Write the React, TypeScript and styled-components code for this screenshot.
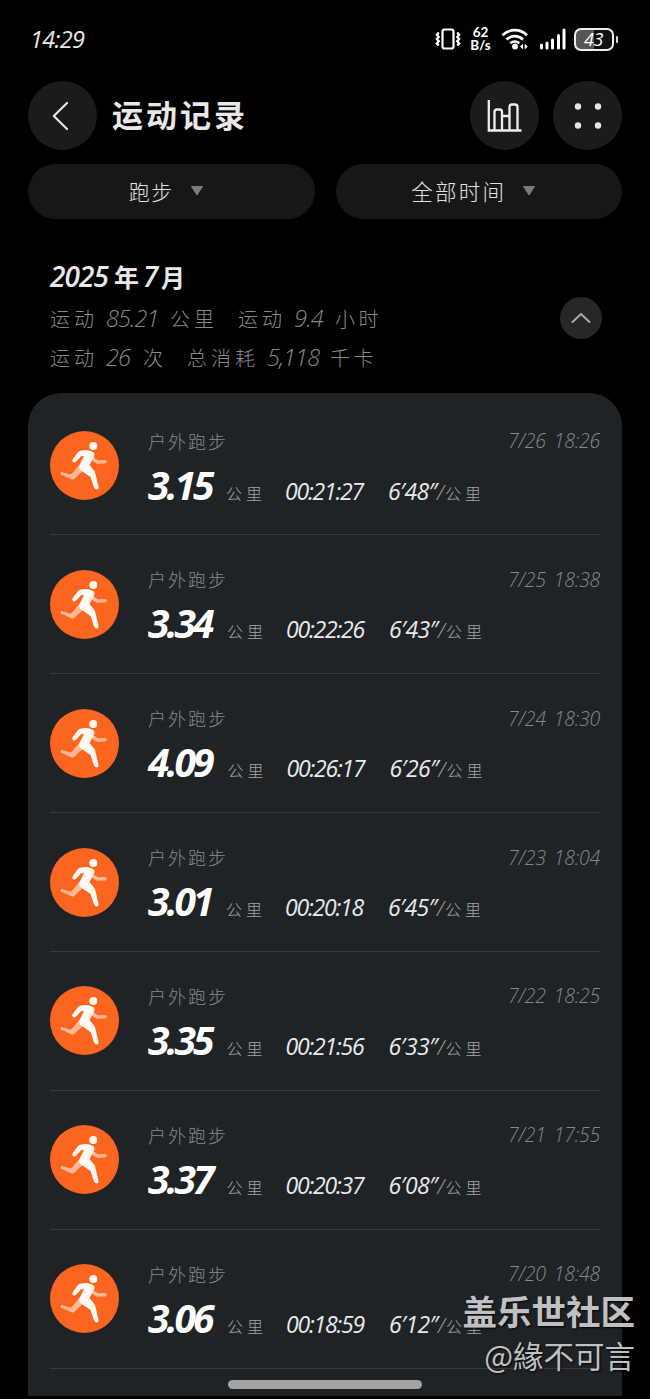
import React from "react";
import styled, { createGlobalStyle } from "styled-components";

const Global = createGlobalStyle`
  * { box-sizing: border-box; }
  body { margin: 0; background: #000; }
`;

const cjk = `"Noto Sans CJK SC", sans-serif`;
const latin = `"Open Sans", "Noto Sans", sans-serif`;

const Screen = styled.div`
  position: relative;
  width: 650px;
  height: 1399px;
  overflow: hidden;
  background: #000;
  color: #e8e8e8;
  font-family: ${cjk};
  padding: 0 28px;
  display: flex;
  flex-direction: column;
`;

const Num = styled.span<{ $size: number; $weight?: number; $w?: number; $ls?: number }>`
  font-family: ${latin};
  font-style: italic;
  white-space: nowrap;
  flex: none;
  font-size: ${(p) => p.$size}px;
  font-weight: ${(p) => p.$weight ?? 400};
  letter-spacing: ${(p) => p.$ls ?? 0}px;
  width: ${(p) => (p.$w ? `${p.$w}px` : "auto")};
`;

const Han = styled.span<{ $size: number; $ls: number; $w?: number; $weight?: number }>`
  font-size: ${(p) => p.$size}px;
  letter-spacing: ${(p) => p.$ls}px;
  font-weight: ${(p) => p.$weight ?? 300};
  width: ${(p) => (p.$w ? `${p.$w}px` : "auto")};
  white-space: nowrap;
  flex: none;
`;

const StatusBar = styled.header`
  height: 81px;
  display: flex;
  align-items: center;
  justify-content: space-between;
  padding: 0 4px 3px 2px;
`;

const StatusIcons = styled.div`
  display: flex;
  align-items: center;
`;

const Speed = styled.div`
  display: flex;
  flex-direction: column;
  align-items: center;
  width: 22px;
  margin: 0 9px 0 9px;
  font: 700 13.5px/13px Lato, sans-serif;
  color: #fff;
`;

const Battery = styled.div`
  display: flex;
  align-items: center;
  justify-content: center;
  width: 40px;
  height: 23px;
  margin-left: 8px;
  border: 2px solid #eee;
  border-radius: 7px;
  background: linear-gradient(90deg, #555 0 50%, #111 50%);
  color: #fff;
`;

const BatteryTip = styled.i`
  width: 2.5px;
  height: 7px;
  margin-left: 2px;
  border-radius: 2px;
  background: #ddd;
`;

const Header = styled.div`
  height: 69px;
  display: flex;
  align-items: center;
`;

const HeaderActions = styled.div`
  display: flex;
  gap: 14px;
`;

const RoundButton = styled.button<{ $size?: number; $bg?: string }>`
  width: ${(p) => p.$size ?? 69}px;
  height: ${(p) => p.$size ?? 69}px;
  flex: none;
  border: 0;
  padding: 0;
  border-radius: 50%;
  background: ${(p) => p.$bg ?? "#1b1b1b"};
  display: flex;
  align-items: center;
  justify-content: center;
`;

const Title = styled.h1`
  flex: 1;
  margin: 0 0 4px 15px;
  font-size: 31px;
  line-height: 40px;
  font-weight: 700;
  letter-spacing: 3px;
`;

const Filters = styled.div`
  margin-top: 14px;
  display: flex;
  gap: 21px;
`;

const Filter = styled.button`
  flex: 1;
  height: 55px;
  border: 0;
  border-radius: 28px;
  background: #171717;
  color: #e2e2e2;
  font-family: inherit;
  display: flex;
  align-items: center;
  justify-content: center;
  gap: 16px;
  padding: 0 10px 2px 0;
`;

const Month = styled.section`
  height: 174px;
  padding: 38px 20px 0 22px;
  display: flex;
  align-items: center;
  justify-content: space-between;
`;

const MonthText = styled.div`
  align-self: flex-start;
`;

const MonthTitle = styled.div`
  display: flex;
  align-items: baseline;
  height: 42px;
  line-height: 38px;
`;

const Summary = styled.div`
  display: flex;
  align-items: baseline;
  height: 38.5px;
  line-height: 38px;
  color: #8a8a8a;
`;

const Collapse = styled.div`
  margin-bottom: 15px;
`;

const Card = styled.main`
  height: 1002.5px;
  padding: 3.6px 22px 0;
  border-radius: 33px 33px 0 0;
  background: #202326;
`;

const Row = styled.article`
  height: 138.85px;
  display: flex;
  align-items: center;
  border-bottom: 1.5px solid #363a3d;
`;

const RowBody = styled.div`
  flex: 1;
  margin-left: 29px;
  padding-top: 12px;
`;

const RowTop = styled.div`
  display: flex;
  justify-content: space-between;
  align-items: center;
  height: 24px;
  color: #85898c;
`;

const DateTime = styled(Num)`
  word-spacing: 3px;
`;

const RowMain = styled.div`
  display: flex;
  align-items: baseline;
  height: 60px;
  line-height: 60px;
  margin-top: 2px;
  color: #e9eaeb;
`;

const Distance = styled(Num)`
  color: #fff;
`;

const Unit = styled(Han)`
  color: #a0a3a5;
`;

const Slash = styled(Num)`
  color: #a0a3a5;
`;

const HomeBar = styled.div`
  position: absolute;
  left: 228px;
  top: 1380px;
  width: 194px;
  height: 9px;
  border-radius: 5px;
  background: #a3a3a3;
`;

const Watermark = styled.div`
  position: absolute;
  right: 15px;
  top: 1288px;
  text-align: right;
  color: #bfc0c2;
  text-shadow: 1px 1px 2px #000;
  white-space: nowrap;
`;

const Community = styled.div`
  font-size: 34.5px;
  line-height: 45px;
  font-weight: 700;
`;

const Author = styled.div`
  font-size: 30.5px;
  line-height: 45px;
  font-weight: 400;
`;

const VibrateIcon = () => (
  <svg width="26" height="24" viewBox="0 0 26 24" fill="none" stroke="#fff" strokeWidth="2.2">
    <rect x="7.500" y="2.500" width="11" height="19" rx="2" />
    <path d="m3.800 5.500-2 2.200 2 2.200-2 2.200 2 2.200-2 2.200 2 2M22.200 5.500l2 2.200-2 2.200 2 2.200-2 2.200 2 2.200-2 2" strokeWidth="2.300" />
  </svg>
);

const WifiIcon = () => (
  <svg width="28" height="24" viewBox="0 0 28 24" fill="none" stroke="#fff" strokeWidth="2.7">
    <path d="M1.500 8.200a17.500 17.500 0 0 1 24.500 0M5.500 12.500a12 12 0 0 1 16.500 0M9.300 16.300a6.500 6.500 0 0 1 9 0" />
    <circle cx="14" cy="19.500" r="2.900" fill="#fff" stroke="none" />
    <path d="m22 16.500-3 3 3 3zM23.700 16.500l3 3-3 3z" fill="#fff" stroke="none" />
  </svg>
);

const SignalIcon = () => (
  <svg width="37" height="23" viewBox="-11 0 37 23" stroke="#fff" strokeWidth="3" strokeLinecap="round">
    <path d="M1.500 17v3M7 15v5M12.500 12v8M18.500 7.500V20M24 2v18" />
  </svg>
);

const BackIcon = () => (
  <svg width="22" height="32" viewBox="0 0 22 32" fill="none" stroke="#e6e6e6" strokeWidth="2.2" strokeLinecap="round" strokeLinejoin="round">
    <path d="M15 3 1.800 16 15 29" />
  </svg>
);

const ChartIcon = () => (
  <svg width="35" height="32" viewBox="0 0 35 32" fill="none" stroke="#eee" strokeWidth="2.300">
    <path d="M1.800 0v30.500H34.500M7.500 30.500V12a2.500 2.500 0 0 1 2.500-2.500h2.500A2.500 2.500 0 0 1 15 12V30.500M22.500 30.500V7A2.500 2.500 0 0 1 25 4.500h3A2.500 2.500 0 0 1 30.500 7V30.500M15 16h7.500" />
  </svg>
);

const DotsIcon = () => (
  <svg width="28" height="28" viewBox="0 0 28 28" fill="#e4e4e4">
    <circle cx="4" cy="4.500" r="3.200" />
    <circle cx="24" cy="4.500" r="3.200" />
    <circle cx="4" cy="23.500" r="3.200" />
    <circle cx="24" cy="23.500" r="3.200" />
  </svg>
);

const Triangle = () => (
  <svg width="14" height="11" viewBox="0 0 14 11">
    <path d="M1.500 1.500h11L7 10z" fill="#7c7c7c" stroke="#7c7c7c" strokeLinejoin="round" />
  </svg>
);

const ChevronUp = () => (
  <svg width="20" height="12" viewBox="0 0 20 12" fill="none" stroke="#aaa" strokeWidth="2" strokeLinecap="round" strokeLinejoin="round">
    <path d="m1.500 10 8.500-8 8.500 8" />
  </svg>
);

const RunnerIcon = () => (
  <svg width="69" height="69" viewBox="0 0 69 69">
    <circle cx="34.500" cy="34.500" r="34.500" fill="#fb6520" />
    <path d="M42 27.500 47.500 31l7.500-.3" fill="none" stroke="#ffb893" strokeWidth="3.600" strokeLinecap="round" strokeLinejoin="round" />
    <path d="M12 41q-2.200.5-1.200 2.600l10.500 4.600q2 .7 3.800-1l9-8.700-5-4.500-7 8.500q-1 1.300-3 .8z" fill="#ffb893" />
    <circle cx="43.300" cy="15" r="4" fill="#fff8f3" />
    <path d="M31 19.500q7-1.500 12 1.500 2.500 1.500 1 4.500L39.500 34l5.300 6.500q1.700 6 3.700 15.500.3 2.500-1.700 2.500t-2.800-2L40.500 46 31 39.500q-3-2.500-1.500-5.500l4.500-9-3 .2-5 5.500q-1.500 1.500-3 .3t-.2-3L28 21q1-1.300 3-1.500z" fill="#fff8f3" />
  </svg>
);

const runs = [
  { date: "7/26", at: "18:26", km: "3.15", w: 78, time: "00:21:27", pace: "6′48″" },
  { date: "7/25", at: "18:38", km: "3.34", w: 79, time: "00:22:26", pace: "6′43″" },
  { date: "7/24", at: "18:30", km: "4.09", w: 79.5, time: "00:26:17", pace: "6′26″" },
  { date: "7/23", at: "18:04", km: "3.01", w: 78, time: "00:20:18", pace: "6′45″" },
  { date: "7/22", at: "18:25", km: "3.35", w: 78.5, time: "00:21:56", pace: "6′33″" },
  { date: "7/21", at: "17:55", km: "3.37", w: 78.5, time: "00:20:37", pace: "6′08″" },
  { date: "7/20", at: "18:48", km: "3.06", w: 79, time: "00:18:59", pace: "6′12″" },
];

export default function App() {
  return (
    <Screen>
      <Global />
      <StatusBar>
        <Num $size={23.5} $ls={-0.7}>14:29</Num>
        <StatusIcons>
          <VibrateIcon />
          <Speed><span>62</span><span>B/s</span></Speed>
          <WifiIcon />
          <SignalIcon />
          <Battery><Num $size={18} $ls={-0.5}>43</Num></Battery>
          <BatteryTip />
        </StatusIcons>
      </StatusBar>
      <Header>
        <RoundButton><BackIcon /></RoundButton>
        <Title>运动记录</Title>
        <HeaderActions>
          <RoundButton><ChartIcon /></RoundButton>
          <RoundButton><DotsIcon /></RoundButton>
        </HeaderActions>
      </Header>
      <Filters>
        <Filter><Han $size={21} $ls={1.5}>跑步</Han><Triangle /></Filter>
        <Filter><Han $size={21.5} $ls={2.2}>全部时间</Han><Triangle /></Filter>
      </Filters>
      <Month>
        <MonthText>
          <MonthTitle>
            <Num $size={28} $weight={600} $w={64} $ls={-0.9}>2025</Num>
            <Han $size={25} $ls={0} $w={29} $weight={700}>年</Han>
            <Num $size={28} $weight={600} $w={18}>7</Num>
            <Han $size={24} $ls={0} $weight={700}>月</Han>
          </MonthTitle>
          <Summary>
            <Han $size={20} $ls={4} $w={56}>运动</Han>
            <Num $size={23.5} $weight={300} $w={64} $ls={-0.9}>85.21</Num>
            <Han $size={20} $ls={4} $w={68}>公里</Han>
            <Han $size={20} $ls={4} $w={56}>运动</Han>
            <Num $size={23.5} $weight={300} $w={41} $ls={-0.7}>9.4</Num>
            <Han $size={20} $ls={3.5}>小时</Han>
          </Summary>
          <Summary>
            <Han $size={20} $ls={4} $w={56}>运动</Han>
            <Num $size={23.5} $weight={300} $w={37} $ls={-1}>26</Num>
            <Han $size={20} $ls={4} $w={44}>次</Han>
            <Han $size={20} $ls={4} $w={80}>总消耗</Han>
            <Num $size={23.5} $weight={300} $w={63} $ls={-0.9}>5,118</Num>
            <Han $size={20} $ls={3.5}>千卡</Han>
          </Summary>
        </MonthText>
        <Collapse>
          <RoundButton $size={42} $bg="#272727"><ChevronUp /></RoundButton>
        </Collapse>
      </Month>
      <Card>
        {runs.map((r) => (
          <Row key={r.date}>
            <RunnerIcon />
            <RowBody>
              <RowTop>
                <Han $size={18} $ls={2}>户外跑步</Han>
                <DateTime $size={19.5} $weight={300} $ls={-0.2}>{r.date} {r.at}</DateTime>
              </RowTop>
              <RowMain>
                <Distance $size={39} $weight={700} $w={r.w} $ls={-3}>{r.km}</Distance>
                <Unit $size={16} $ls={4} $w={59}>公里</Unit>
                <Num $size={23} $w={103} $ls={-1.2}>{r.time}</Num>
                <Num $size={23} $w={49} $ls={-0.6}>{r.pace}</Num>
                <Slash $size={21} $weight={300} $w={8}>/</Slash>
                <Unit $size={16} $ls={4}>公里</Unit>
              </RowMain>
            </RowBody>
          </Row>
        ))}
      </Card>
      <HomeBar />
      <Watermark>
        <Community>盖乐世社区</Community>
        <Author>@緣不可言</Author>
      </Watermark>
    </Screen>
  );
}
